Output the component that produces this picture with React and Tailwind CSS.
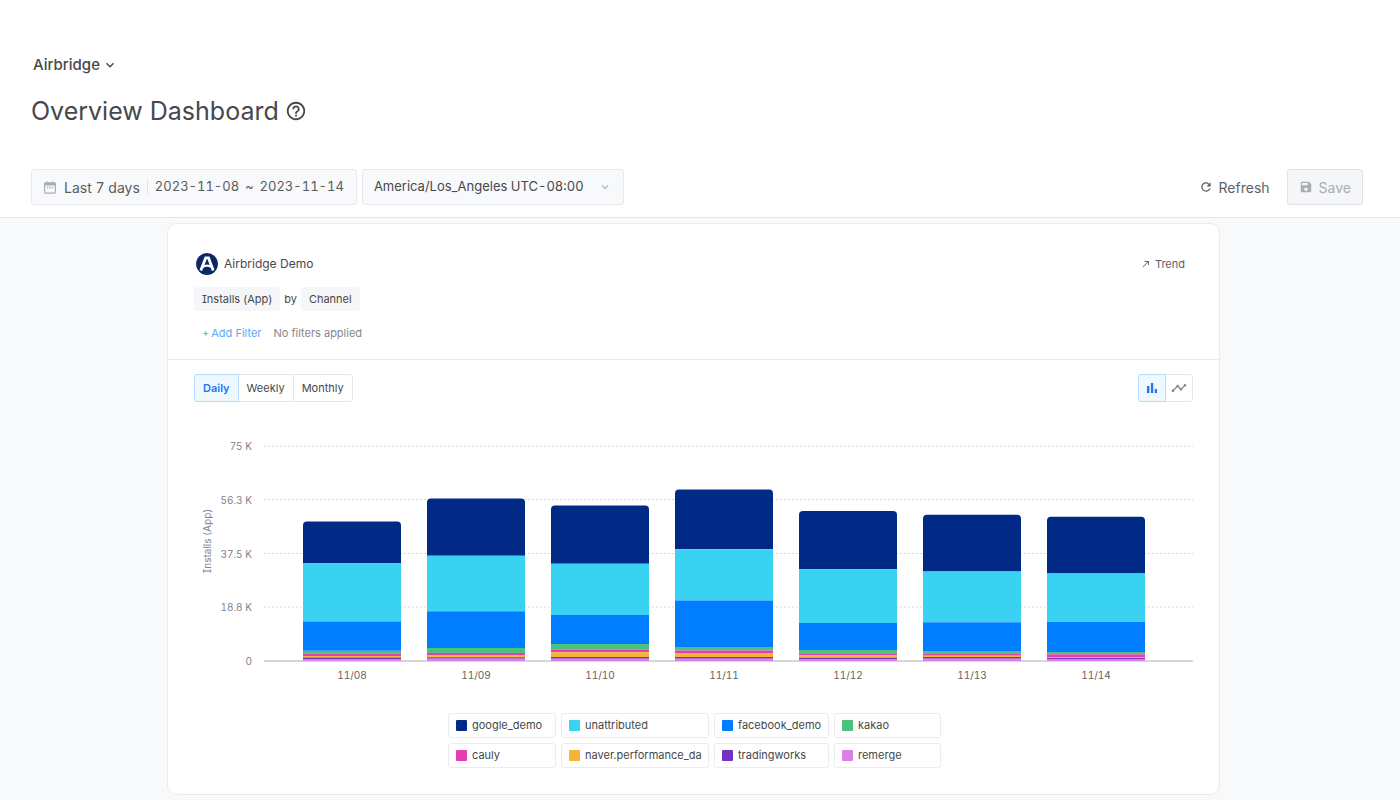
import React, { useState } from "react";
import {
  MdCallMade,
  MdHelpOutline,
  MdKeyboardArrowDown,
  MdRefresh,
  MdSave,
  MdTimeline,
} from "react-icons/md";

const CHANNELS = [
  { name: "google_demo", color: "#002a86" },
  { name: "unattributed", color: "#39d2f2" },
  { name: "facebook_demo", color: "#007eff" },
  { name: "kakao", color: "#4bc27d" },
  { name: "cauly", color: "#e63eb0" },
  { name: "naver.performance_da", color: "#f7b337" },
  { name: "tradingworks", color: "#7232c4" },
  { name: "remerge", color: "#dd80e3" },
];

// Cumulative tops of every stacked series, in plot units above the baseline.
const DAYS = [
  { label: "11/08", tops: [139.5, 98, 39.5, 10.2, 7.2, 5, 3.5, 2] },
  { label: "11/09", tops: [162.5, 105.2, 49.7, 13, 8, 6, 3.7, 2.3] },
  { label: "11/10", tops: [155.5, 97.2, 46, 17, 11.3, 8.7, 4, 2.3] },
  { label: "11/11", tops: [171.5, 111.7, 60.5, 14, 10.5, 8, 4, 2.3] },
  { label: "11/12", tops: [150, 91.7, 38, 11, 7.7, 5.5, 3.3, 2] },
  { label: "11/13", tops: [146.3, 89.5, 38.7, 10, 7.7, 5.3, 4, 2.3] },
  { label: "11/14", tops: [144.3, 87.5, 39.2, 9, 6.7, 4, 3, 2] },
];

const TICKS = [
  { label: "75 K", y: 16 },
  { label: "56.3 K", y: 69.5 },
  { label: "37.5 K", y: 123.5 },
  { label: "18.8 K", y: 177 },
];

const BASE = 231;

function CalendarIcon() {
  return (
    <svg width="12" height="13" viewBox="0 0 12 13" className="shrink-0" aria-hidden="true">
      <path d="M3 0.5v2M9 0.5v2" stroke="#a9adb5" strokeWidth="1.4" />
      <rect x="0.6" y="1.9" width="10.8" height="10.2" rx="1" fill="none" stroke="#a9adb5" strokeWidth="1.2" />
      <path d="M0.6 1.9h10.8v2.6H0.6z" fill="#a9adb5" />
      <path d="M3 6.5h1.3M5.4 6.5h1.3M7.8 6.5h1.3" stroke="#a9adb5" strokeWidth="1.3" />
    </svg>
  );
}

function BarsIcon() {
  return (
    <svg width="16" height="16" viewBox="0 0 16 16" className="mx-[5px]" fill="currentColor" aria-hidden="true">
      <path d="M3 6h2.4v7H3zM6.9 3h2.3v10H6.9zM10.7 9h2.3v4h-2.3z" />
    </svg>
  );
}

function AirbridgeLogo() {
  return (
    <svg width="22" height="22" viewBox="0 0 22 22" className="shrink-0" aria-hidden="true">
      <circle cx="11" cy="11" r="10.9" fill="#0b2764" />
      <path d="M4.8 17.6 9.7 4.9H12.5L17.2 17.6" fill="none" stroke="#fff" strokeWidth="2.8" />
      <path d="M6.4 14.2C9 12.4 13 12.4 15.8 14.2" fill="none" stroke="#fff" strokeWidth="2.2" />
    </svg>
  );
}

function StackedBar({ x, tops }) {
  const top = BASE - tops[0];
  const firstBottom = BASE - tops[1];
  return (
    <g>
      <path
        d={`M${x} ${firstBottom}V${top + 4}a4 4 0 0 1 4 -4h90a4 4 0 0 1 4 4V${firstBottom}z`}
        fill={CHANNELS[0].color}
      />
      {tops.slice(1).map((value, i) => {
        const next = tops[i + 2] ?? 0;
        return (
          <rect
            key={CHANNELS[i + 1].name}
            x={x}
            y={BASE - value}
            width="98"
            height={value - next}
            fill={CHANNELS[i + 1].color}
          />
        );
      })}
    </g>
  );
}

function InstallsChart() {
  return (
    <svg
      viewBox="0 0 999 260"
      className="block w-full text-[10px] [font-feature-settings:'tnum','cv08']"
      role="img"
      aria-label="Installs (App) by Channel"
    >
      {TICKS.map((t) => (
        <g key={t.label}>
          <line x1="70" x2="999" y1={t.y} y2={t.y} stroke="#d6d7da" strokeDasharray="2 2" />
          <text x="58" y={t.y + 4} textAnchor="end" fill="#808388">
            {t.label}
          </text>
        </g>
      ))}
      <text x="58" y={BASE + 4} textAnchor="end" fill="#808388">
        0
      </text>
      <text transform="translate(17 111) rotate(-90)" textAnchor="middle" fill="#808388">
        Installs (App)
      </text>
      <line x1="70" x2="999" y1={BASE} y2={BASE} stroke="#c9cace" strokeWidth="1.4" />
      {DAYS.map((d, i) => (
        <g key={d.label}>
          <StackedBar x={109 + i * 124} tops={d.tops} />
          <text x={158 + i * 124} y="249" textAnchor="middle" fill="#5f6165">
            {d.label}
          </text>
        </g>
      ))}
    </svg>
  );
}

function Segment({ active, first, last, children, ...rest }) {
  const tone = active
    ? "z-10 border-[#b5dcff] bg-[#edf9ff] text-[#2474f5]"
    : "border-[#e6e7eb] bg-white text-[#46484c]";
  return (
    <button
      type="button"
      aria-pressed={active}
      className={`-mr-px flex h-7 items-center justify-center border ${tone} ${first ? "rounded-l-[3px]" : ""} ${last ? "rounded-r-[3px]" : ""}`}
      {...rest}
    >
      {children}
    </button>
  );
}

export default function App() {
  const [period, setPeriod] = useState("Daily");
  const [chart, setChart] = useState("bar");
  const periods = ["Daily", "Weekly", "Monthly"];

  return (
    <div className="flex min-h-screen flex-col bg-[#f8f9fb] font-['Inter',sans-serif] text-[#46484c] [font-feature-settings:'cv08']">
      <header className="border-b border-[#e4e5ea] bg-white pt-[54px] pr-[37px] pb-3 pl-[31px]">
        <button type="button" className="ml-0.5 flex h-[22px] items-center gap-0.5 text-[15px] font-medium">
          Airbridge
          <MdKeyboardArrowDown className="size-4" />
        </button>
        <div className="mt-[17px] flex h-9 items-center gap-1.5">
          <h1 className="text-[25px] leading-9">Overview Dashboard</h1>
          <MdHelpOutline className="size-[22px]" />
        </div>
        <div className="mt-10 flex items-center justify-between">
          <div className="flex gap-[5px]">
            <button
              type="button"
              className="flex h-9 items-center rounded-[3px] border border-[#e7e8ec] bg-[#f8f9fb] px-3 text-[13px] whitespace-nowrap text-[#5a5c60] [font-feature-settings:'tnum','cv08']"
            >
              <CalendarIcon />
              <span className="ml-2 text-[14px]">Last 7 days</span>
              <span className="mx-[7px] h-3.5 w-px bg-[#e1e2e6]" />
              <span>2023-11-08</span>
              <span className="mx-1.5">~</span>
              <span>2023-11-14</span>
            </button>
            <div className="relative">
              <select
                aria-label="Timezone"
                className="h-9 w-[262px] appearance-none rounded-[3px] border border-[#e7e8ec] bg-[#f8f9fb] pr-7 pl-[11px] text-[13px] text-[#46484c] [font-feature-settings:'tnum','cv08']"
              >
                <option>America/Los_Angeles UTC-08:00</option>
              </select>
              <MdKeyboardArrowDown className="pointer-events-none absolute top-[11px] right-3 size-3.5 text-[#a9adb5]" />
            </div>
          </div>
          <div className="flex items-center gap-[17px] text-[14px]">
            <button type="button" className="flex items-center gap-1.5 text-[#5f6165]">
              <MdRefresh className="size-3.5" />
              Refresh
            </button>
            <button
              type="button"
              disabled
              className="flex h-9 items-center gap-1.5 rounded-[3px] border border-[#e2e3e7] bg-[#f5f6f8] px-[11px] text-[#a9adb5]"
            >
              <MdSave className="size-3.5" />
              Save
            </button>
          </div>
        </div>
      </header>

      <main className="flex flex-1 justify-center pt-[5px] pr-[13px] pb-[5px]">
        <section className="w-full max-w-[1053px] rounded-[10px] border border-[#e9ebef] bg-white text-[11px]">
          <div className="border-b border-[#e9ebef] px-[26px] pt-[29px] pb-4">
            <div className="flex items-center justify-between pr-2 pl-0.5">
              <div className="flex items-center gap-1.5">
                <AirbridgeLogo />
                <h2 className="text-[12px]">Airbridge Demo</h2>
              </div>
              <a href="#trend" className="flex items-center gap-1 text-[#5f6165]">
                <MdCallMade className="size-2.5" />
                Trend
              </a>
            </div>
            <div className="mt-3 flex items-center gap-1">
              <button type="button" className="h-6 rounded-[3px] bg-[#f5f6f8] px-2">
                Installs (App)
              </button>
              <span>by</span>
              <button type="button" className="h-6 rounded-[3px] bg-[#f5f6f8] px-2">
                Channel
              </button>
            </div>
            <div className="mt-3 flex h-5 items-center gap-3 pl-2">
              <button type="button" className="flex items-center gap-0.5 text-[#56aaf8]">
                <span>+</span>
                Add Filter
              </button>
              <span className="text-[#85878b]">No filters applied</span>
            </div>
          </div>

          <div className="px-[26px] pt-3.5 pb-[26px]">
            <div className="flex items-center justify-between">
              <div className="flex">
                {periods.map((p, i) => (
                  <Segment
                    key={p}
                    active={period === p}
                    first={i === 0}
                    last={i === periods.length - 1}
                    onClick={() => setPeriod(p)}
                  >
                    <span className={`px-2 ${period === p ? "font-semibold" : ""}`}>{p}</span>
                  </Segment>
                ))}
              </div>
              <div className="flex pr-px">
                <Segment active={chart === "bar"} first aria-label="Bar chart" onClick={() => setChart("bar")}>
                  <BarsIcon />
                </Segment>
                <Segment active={chart === "line"} last aria-label="Line chart" onClick={() => setChart("line")}>
                  <MdTimeline className="mx-[5px] size-4 text-[#85878b]" />
                </Segment>
              </div>
            </div>

            <div className="mt-7">
              <InstallsChart />
            </div>

            <ul className="mt-[23px] grid grid-cols-[108px_148px_115px_107px] justify-center gap-[5px] pl-0.5">
              {CHANNELS.map((channel) => (
                <li
                  key={channel.name}
                  className="flex h-[25px] items-center gap-[5px] rounded-[3px] border border-[#ebecf0] px-[7px] whitespace-nowrap"
                >
                  <svg width="11" height="11" viewBox="0 0 11 11" className="shrink-0" aria-hidden="true">
                    <rect width="11" height="11" rx="1" fill={channel.color} />
                  </svg>
                  {channel.name}
                </li>
              ))}
            </ul>
          </div>
        </section>
      </main>
    </div>
  );
}
